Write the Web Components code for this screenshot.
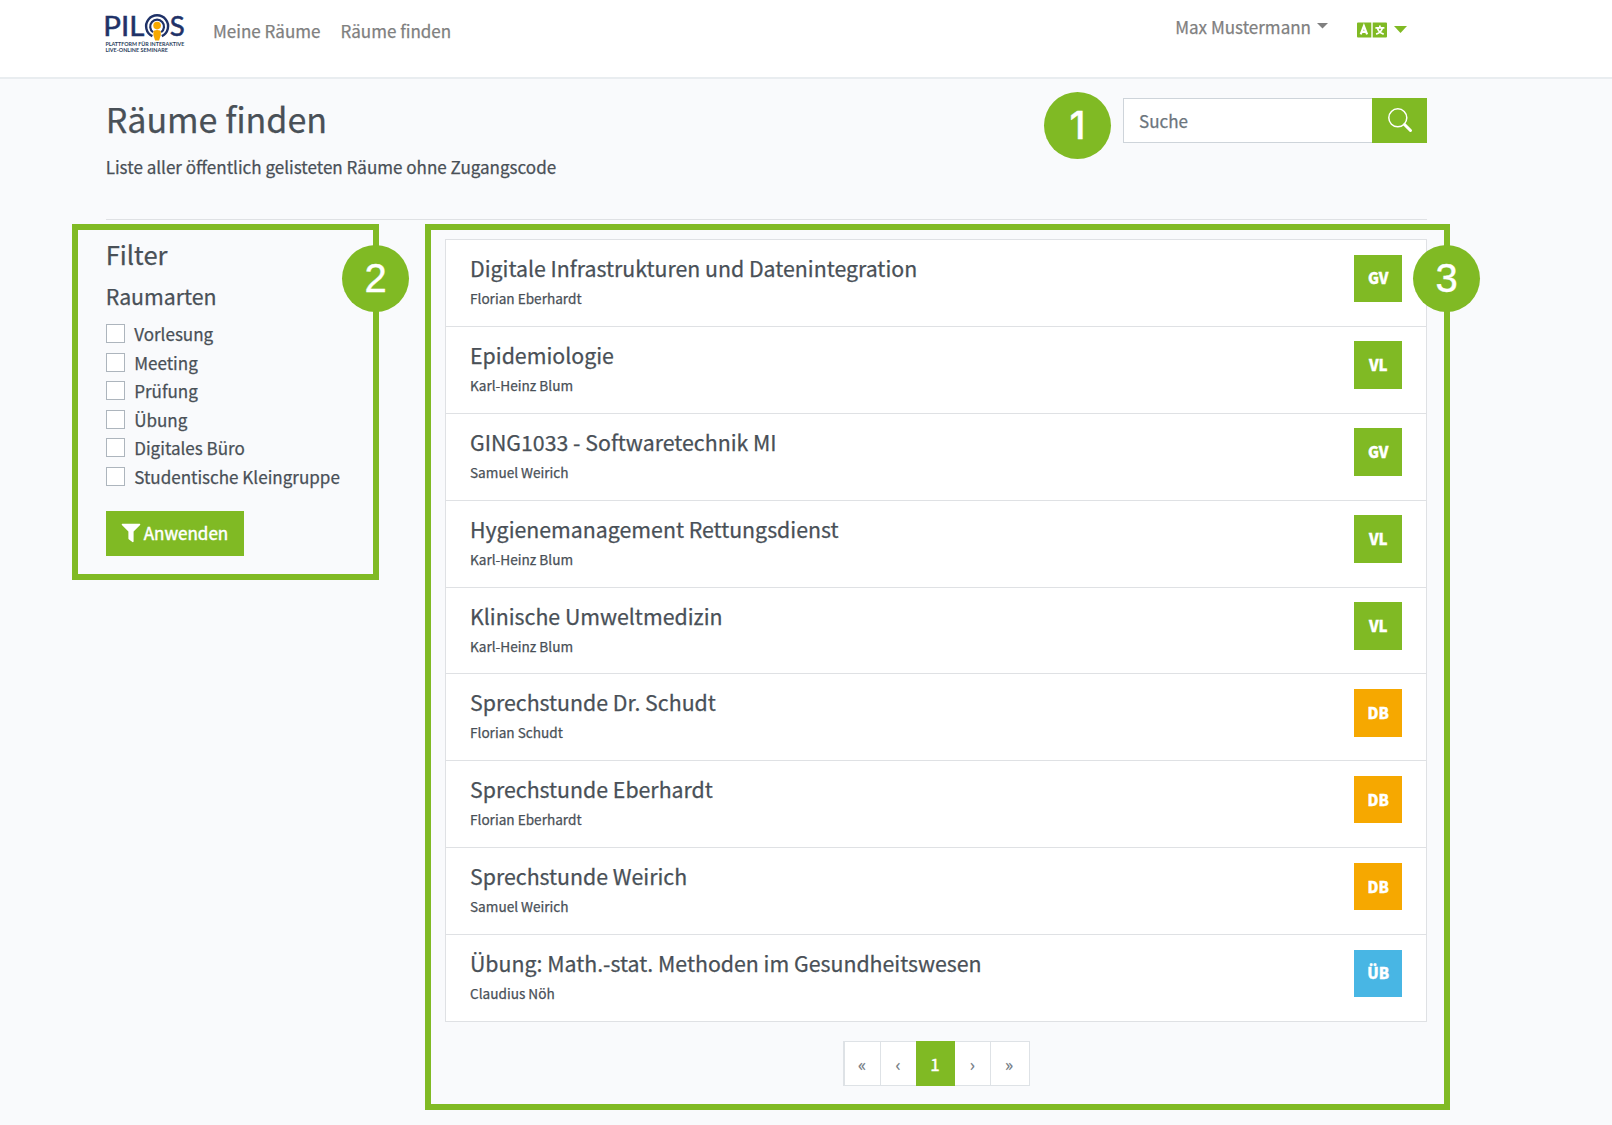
<!DOCTYPE html>
<html lang="de">
<head>
<meta charset="utf-8">
<title>Räume finden</title>
<style>
  html, body { margin: 0; height: 100%; }
  body { background: #f9fafc; color: #495057; font-family: "Noto Sans CJK JP", "Open Sans", sans-serif; font-size: 17.040px; -webkit-text-stroke: .25px currentColor; --green: #80ba24; --orange: #f6a800; --blue: #48b6e4; overflow: hidden; }
</style>
</head>
<body>
<pilos-page></pilos-page>
<script>
const define = (name, html, init) => {
  const template = document.createElement('template');
  template.innerHTML = html;
  customElements.define(name, class extends HTMLElement {
    connectedCallback() {
      if (this.shadowRoot) return;
      this.attachShadow({ mode: 'open' }).append(template.content.cloneNode(true));
      if (init) init(this, this.shadowRoot);
    }
  });
};

define('pilos-logo', `
  <style>:host{display:block;width:80px;height:40px;-webkit-text-stroke:0} svg{display:block;overflow:visible}</style>
  <svg width="80" height="40" viewBox="0 0 80 40">
    <g fill="#1f3268" stroke="#1f3268" stroke-width=".5" font-family="Lato, sans-serif" font-size="27">
      <text x="-1.700" y="22.200" textLength="41" lengthAdjust="spacingAndGlyphs">PIL</text>
      <text x="64.800" y="22.200" textLength="15" lengthAdjust="spacingAndGlyphs">S</text>
    </g>
    <g fill="none" stroke="#1f3268">
      <path stroke-width="2.400" d="M47.400 22.200A11 11 0 1 1 56.800 22.200"/>
      <path stroke-width="2.200" d="M48.100 18.200A6.900 6.900 0 1 1 56.100 18.200"/>
    </g>
    <circle cx="52.100" cy="11.600" r="3.800" fill="#f6a800"/>
    <path d="M48.400 18Q48.400 16 52.100 16T55.800 18V21L54.100 26.500H50.100L48.400 21Z" fill="#f6a800"/>
    <g fill="#2c3e5c" font-family="Lato, sans-serif" font-weight="700" font-size="5.300">
      <text x=".4" y="32.200" textLength="79" lengthAdjust="spacingAndGlyphs">PLATTFORM FÜR INTERAKTIVE</text>
      <text x=".4" y="38.400" textLength="62.500" lengthAdjust="spacingAndGlyphs">LIVE-ONLINE SEMINARE</text>
    </g>
  </svg>`);

define('language-menu', `
  <style>:host{display:flex;align-items:center;gap:7px} svg{display:block}</style>
  <svg width="30" height="16" viewBox="0 0 30 16">
    <path fill="#80ba24" d="M1 .5H14.300V15.500H1A1 1 0 0 1 0 14.500V1.500A1 1 0 0 1 1 .5ZM15.700 .5H29A1 1 0 0 1 30 1.500V14.500A1 1 0 0 1 29 15.500H15.700Z"/>
    <path fill="none" stroke="#fff" stroke-width="2.200" d="M3.700 12.300L6.900 4.100L10.100 12.300M4.900 9.800H8.900"/>
    <path fill="none" stroke="#fff" stroke-width="1.800" d="M18.400 5.800H27.400M22.900 3.600V5.800M25.300 6.200C24.700 9.300 22 11.300 19.100 12.200M20.500 6.200C21.100 9.300 23.800 11.300 26.700 12.200"/>
  </svg>
  <svg width="13" height="7" style="margin-top:-1px"><path d="M0 0H13L6.500 7Z" fill="#80ba24"/></svg>`);

define('pilos-header', `
  <style>
    :host{display:flex;box-sizing:border-box;height:79px;padding:0 184px 0 105px;background:#fff;border-bottom:2px solid #e9edf0;color:#808080;align-items:flex-start}
    pilos-logo{margin-top:14px}
    nav{display:flex;gap:20px;margin:17px 0 0 28px;line-height:28px}
    .user{display:flex;gap:6px;margin:12.500px 20px 0 auto;line-height:28px;align-items:center}
    .user svg{margin-top:-2px}
    language-menu{margin:22px 21px 0 9px}
  </style>
  <pilos-logo></pilos-logo>
  <nav><span>Meine Räume</span><span>Räume finden</span></nav>
  <div class="user"><span>Max Mustermann</span><svg width="11" height="6"><path d="M0 0H11L5.500 5.500Z" fill="#808080"/></svg></div>
  <language-menu></language-menu>`);

define('search-box', `
  <style>
    :host{display:flex;width:304px;height:45px}
    .field{flex:1;box-sizing:border-box;border:1px solid #ced4da;border-right:0;background:#fff;padding-left:15px;line-height:43px;color:#6c757d}
    .go{width:55px;background:var(--green);display:flex;align-items:center;justify-content:center}
  </style>
  <div class="field">Suche</div>
  <div class="go"><svg width="26" height="26" viewBox="0 0 26 26" fill="none" stroke="#fff"><circle cx="10.800" cy="10.800" r="9" stroke-width="1.500"/><path d="M17.500 17.500L23.500 23.500" stroke-width="3" stroke-linecap="round"/></svg></div>`);

define('check-item', `
  <style>
    :host{display:flex;height:28.570px;line-height:28px;align-items:flex-start;gap:9.500px;white-space:nowrap}
    i{box-sizing:border-box;width:19px;height:19px;border:1px solid #adb5bd;background:#fff;margin-top:4px}
  </style>
  <i></i><span><slot></slot></span>`);

define('filter-panel', `
  <style>
    :host{display:block;width:260px}
    h4,h5{margin:0;font-weight:400}
    h4{font-size:25.600px;line-height:34px;margin-top:17px}
    h5{font-size:21.300px;line-height:29px;margin:9.500px 0 10.700px}
    button{all:unset;display:flex;box-sizing:border-box;width:138px;height:45px;margin-top:19px;padding-left:15px;gap:3px;align-items:center;background:var(--green);color:#fff}
    button span{-webkit-text-stroke:.45px #fff;margin-top:-1px}
  </style>
  <h4>Filter</h4><h5>Raumarten</h5>
  <check-item>Vorlesung</check-item><check-item>Meeting</check-item><check-item>Prüfung</check-item>
  <check-item>Übung</check-item><check-item>Digitales Büro</check-item><check-item>Studentische Kleingruppe</check-item>
  <button><svg width="20" height="20" viewBox="0 0 20 20"><path d="M1.300 .8H18.700Q19.800 1 19.100 2L12.600 8.600V18.400Q12.400 19.500 11.400 19L8 16.600Q7.400 16.200 7.400 15.500V8.600L.9 2Q.2 1 1.300 .8Z" fill="#fff"/></svg><span>Anwenden</span></button>`);

define('room-item', `
  <style>
    :host{display:flex;box-sizing:border-box;height:86.900px;padding:14.500px 24px 0 24px;border-top:1px solid #dfe1e4;justify-content:space-between;align-items:flex-start}
    h5{margin:-1.500px 0 0;font-weight:400;font-size:21.320px;line-height:29px}
    p{margin:5px 0 0;font-size:13.620px;line-height:22px}
    b{width:47.600px;height:47.600px;display:flex;align-items:center;justify-content:center;color:#fff;background:var(--tone);font-size:15px;font-weight:900;line-height:20px;-webkit-text-stroke:.35px #fff}
  </style>
  <div><h5><slot></slot></h5><p></p></div><b></b>`, (el, root) => {
    root.querySelector('p').textContent = el.getAttribute('owner');
    root.querySelector('b').textContent = el.getAttribute('type');
    el.style.setProperty('--tone', { DB: 'var(--orange)', 'ÜB': 'var(--blue)' }[el.getAttribute('type')] || 'var(--green)');
  });

define('room-pagination', `
  <style>
    :host{display:flex;width:187px;height:45px;box-sizing:border-box;background:#fff;border:1px solid #dee2e6;color:#6c757d}
    span{flex:0 0 auto;box-sizing:border-box;width:36px;line-height:43px;text-align:center;border-left:1px solid #dee2e6}
    span:first-child{width:37.500px;border:0} span:last-child{width:37px}
    .on{width:39px;height:45px;margin:-1px 0;background:var(--green);color:#fff;border:0;line-height:45px;-webkit-text-stroke:.4px #fff}
    .on + span{border:0;width:35.500px}
  </style>
  <span>«</span><span>‹</span><span class="on">1</span><span>›</span><span>»</span>`);

define('room-list', `
  <style>
    :host{display:flex;flex-direction:column;align-items:center;width:982px;padding-top:19px}
    .rows{align-self:stretch;background:#fff;border:1px solid #dfe1e4;border-top:0}
    room-pagination{margin-top:19px}
  </style>
  <div class="rows">
    <room-item owner="Florian Eberhardt" type="GV">Digitale Infrastrukturen und Datenintegration</room-item>
    <room-item owner="Karl-Heinz Blum" type="VL">Epidemiologie</room-item>
    <room-item owner="Samuel Weirich" type="GV">GING1033 - Softwaretechnik MI</room-item>
    <room-item owner="Karl-Heinz Blum" type="VL">Hygienemanagement Rettungsdienst</room-item>
    <room-item owner="Karl-Heinz Blum" type="VL">Klinische Umweltmedizin</room-item>
    <room-item owner="Florian Schudt" type="DB">Sprechstunde Dr. Schudt</room-item>
    <room-item owner="Florian Eberhardt" type="DB">Sprechstunde Eberhardt</room-item>
    <room-item owner="Samuel Weirich" type="DB">Sprechstunde Weirich</room-item>
    <room-item owner="Claudius Nöh" type="ÜB">Übung: Math.-stat. Methoden im Gesundheitswesen</room-item>
  </div>
  <room-pagination></room-pagination>`);

/* Callouts that lie over the page: numbered discs and outlined regions */
define('callout-number', `
  <style>
    :host{position:absolute;width:67px;height:67px;border-radius:50%;background:var(--green);color:#fff;font:40px/66px "Liberation Sans",Arial,sans-serif;text-align:center;-webkit-text-stroke:.4px #fff}
    :host([plain]){font:500 38.500px/66px Inter,"Liberation Sans",sans-serif}
  </style><slot></slot>`);
define('callout-frame', `
  <style>:host{position:absolute;box-sizing:border-box;border:6px solid var(--green)}</style>`);

define('pilos-page', `
  <style>
    :host{display:block;position:relative;height:1125px}
    main{padding:0 185px 0 105.700px}
    .top{display:flex;justify-content:space-between;height:141px;border-bottom:1px solid #dfe1e4;box-sizing:border-box}
    h2{margin:16px 0 0;font-weight:400;font-size:34.100px;line-height:46px}
    .top p{margin:12px 0 0;line-height:28px}
    search-box{margin-top:18.500px}
    .cols{display:flex;justify-content:space-between}
  </style>
  <pilos-header></pilos-header>
  <main>
    <div class="top"><div><h2>Räume finden</h2><p>Liste aller öffentlich gelisteten Räume ohne Zugangscode</p></div><search-box></search-box></div>
    <div class="cols"><filter-panel></filter-panel><room-list></room-list></div>
  </main>
  <callout-frame style="left:72px;top:224px;width:307px;height:356px"></callout-frame>
  <callout-frame style="left:425px;top:224px;width:1025px;height:886px"></callout-frame>
  <callout-number plain style="left:1044px;top:92px">1</callout-number>
  <callout-number style="left:342px;top:245px">2</callout-number>
  <callout-number style="left:1413px;top:245px">3</callout-number>`);
</script>
</body>
</html>
